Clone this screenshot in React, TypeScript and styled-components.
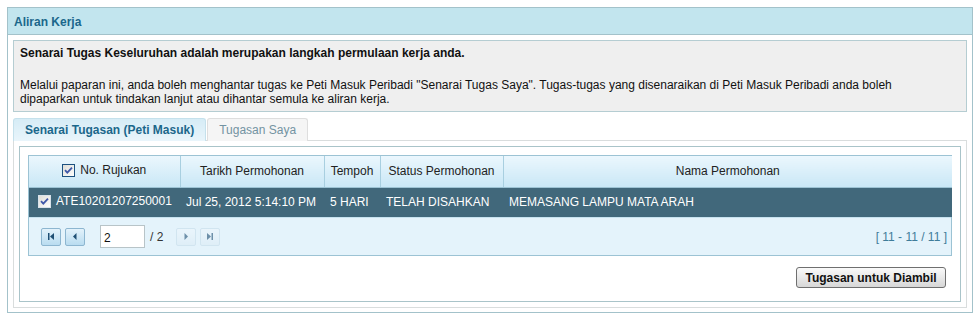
import React from "react";
import styled, { createGlobalStyle } from "styled-components";

const Global = createGlobalStyle`
  html, body { margin: 0; padding: 0; background: #fff; }
  body { padding: 7px 5px 4px 7px; font-family: "Liberation Sans", Arial, sans-serif; font-size: 12px; color: #111; }
  * { box-sizing: border-box; }
`;

const Panel = styled.div`
  width: 966px;
  border: 1px solid #a3c2ca;
  background: #fff;
`;

const PanelHeader = styled.div`
  height: 27px;
  background: #c2e5ee;
  border-bottom: 1px solid #a3c2ca;
  color: #1b678b;
  font-weight: bold;
  display: flex;
  align-items: center;
  padding: 1px 0 0 6px;
`;

const PanelBody = styled.div`
  padding: 5px 5px 4px 5px;
  display: flex;
  flex-direction: column;
`;

const Info = styled.div`
  background: #efefef;
  border: 1px solid #b5cdd2;
  padding: 5px 6px 5px 6px;
  line-height: 14px;
`;

const InfoTitle = styled.p`
  margin: 0 0 18px 0;
  font-weight: bold;
`;

const InfoText = styled.p`
  margin: 0;
  max-width: 900px;
`;

const Tabs = styled.div`
  display: flex;
  margin-top: 6px;
  height: 22px;
`;

const Tab = styled.div<{ $active?: boolean }>`
  height: 23px;
  display: flex;
  align-items: center;
  padding: 0 11px;
  margin-right: 1px;
  border: 1px solid ${(p) => (p.$active ? "#c5e1ec" : "#dedede")};
  border-bottom: none;
  border-radius: 3px 3px 0 0;
  background: ${(p) =>
    p.$active ? "linear-gradient(#d6ecf6, #e9f5fb)" : "#f5f5f5"};
  color: ${(p) => (p.$active ? "#1b678b" : "#7393a2")};
  font-weight: ${(p) => (p.$active ? "bold" : "normal")};
  position: relative;
  z-index: 1;
`;

const TabPanel = styled.div`
  border: 1px solid #d9dddd;
  padding: 5px;
`;

const Inner = styled.div`
  border: 1px solid #a9c4c9;
  padding: 8px 8px 13px 8px;
  display: flex;
  flex-direction: column;
`;

const GridWrap = styled.div`
  border: 1px solid #9cc3d4;
`;

const Table = styled.table`
  width: 100%;
  border-collapse: collapse;
  table-layout: fixed;
`;

const Th = styled.th`
  height: 31px;
  font-weight: normal;
  color: #222;
  text-align: center;
  background: linear-gradient(#ebf7fd, #c9e7f6);
  border-right: 1px solid #a8cfe0;
  border-bottom: 1px solid #9cc3d4;
  padding: 0;
  &:last-child { border-right: none; }
`;

const ThInner = styled.span`
  display: inline-flex;
  align-items: center;
  gap: 5px;
`;

const Td = styled.td`
  height: 30px;
  background: #41687b;
  color: #fff;
  padding: 0 6px;
  white-space: nowrap;
`;

const TdInner = styled.span`
  display: inline-flex;
  align-items: center;
  gap: 5px;
  margin-left: 3px;
`;

const Pager = styled.div`
  height: 38px;
  background: #e4f3fb;
  border-top: 1px solid #c6e2ef;
  display: flex;
  align-items: center;
  padding: 0 4px 0 12px;
`;

const PageBtn = styled.button<{ $disabled?: boolean }>`
  width: 20px;
  height: 18px;
  margin-right: 4px;
  padding: 0;
  border: 1px solid ${(p) => (p.$disabled ? "#c5dcea" : "#8db6d0")};
  border-radius: 2px;
  background: ${(p) =>
    p.$disabled ? "linear-gradient(#eef7fc, #dcecf6)" : "linear-gradient(#e3f2fb, #b9dcf0)"};
  display: flex;
  align-items: center;
  justify-content: center;
  opacity: ${(p) => (p.$disabled ? 0.6 : 1)};
`;

const PageInput = styled.input`
  width: 45px;
  height: 23px;
  margin-left: 11px;
  border: 1px solid #b8c4c8;
  font-family: "Liberation Sans", Arial, sans-serif;
  font-size: 12px;
  padding: 3px 3px 0 3px;
  color: #111;
`;

const PageTotal = styled.span`
  margin: 0 13px 0 5px;
  color: #333;
`;

const PageInfo = styled.span`
  margin-left: auto;
  color: #3f7c9a;
  font-size: 12px;
`;

const Actions = styled.div`
  display: flex;
  justify-content: flex-end;
  margin-top: 11px;
  padding-right: 6px;
`;

const ActionButton = styled.button`
  width: 150px;
  height: 21px;
  border: 1px solid #6f6f6f;
  border-radius: 3px;
  background: linear-gradient(#fafafa, #d7d7d7);
  font-family: "Liberation Sans", Arial, sans-serif;
  font-size: 12px;
  font-weight: bold;
  color: #111;
  padding: 0;
`;

const Check = ({ light }: { light?: boolean }) => (
  <svg width="13" height="13" viewBox="0 0 13 13">
    <defs>
      <linearGradient id={light ? "cbl" : "cbd"} x1="0" y1="0" x2="1" y2="1">
        <stop offset="0" stopColor="#dcdcd6" />
        <stop offset="1" stopColor="#ffffff" />
      </linearGradient>
    </defs>
    <rect x="0.5" y="0.5" width="12" height="12" fill={`url(#${light ? "cbl" : "cbd"})`} stroke={light ? "#d8e2ea" : "#1c5180"} />
    <path d="M3 6.2 L5.3 8.6 L10 3.6" fill="none" stroke="#3f58a8" strokeWidth="1.8" />
  </svg>
);

const Icon = ({ kind }: { kind: "first" | "prev" | "next" | "last" }) => {
  const c = "#1f4f74";
  return (
    <svg width="10" height="9" viewBox="0 0 10 9">
      {kind === "first" && (
        <>
          <rect x="2" y="1" width="1.5" height="7" fill={c} />
          <path d="M8 1 L4 4.5 L8 8 Z" fill={c} />
        </>
      )}
      {kind === "prev" && <path d="M6.5 1 L3 4.5 L6.5 8 Z" fill={c} />}
      {kind === "next" && <path d="M3.5 1 L7 4.5 L3.5 8 Z" fill={c} />}
      {kind === "last" && (
        <>
          <path d="M2 1 L6 4.5 L2 8 Z" fill={c} />
          <rect x="6.5" y="1" width="1.5" height="7" fill={c} />
        </>
      )}
    </svg>
  );
};

const columns = [
  { w: 151, label: "No. Rujukan", check: true },
  { w: 144, label: "Tarikh Permohonan" },
  { w: 56, label: "Tempoh" },
  { w: 123, label: "Status Permohonan" },
  { w: 449, label: "Nama Permohonan" },
];

export default function App() {
  return (
    <>
      <Global />
      <Panel>
        <PanelHeader>Aliran Kerja</PanelHeader>
        <PanelBody>
          <Info>
            <InfoTitle>Senarai Tugas Keseluruhan adalah merupakan langkah permulaan kerja anda.</InfoTitle>
            <InfoText>
              Melalui paparan ini, anda boleh menghantar tugas ke Peti Masuk Peribadi "Senarai Tugas Saya". Tugas-tugas yang disenaraikan di Peti Masuk Peribadi anda boleh dipaparkan untuk tindakan lanjut atau dihantar semula ke aliran kerja.
            </InfoText>
          </Info>
          <Tabs>
            <Tab $active>Senarai Tugasan (Peti Masuk)</Tab>
            <Tab>Tugasan Saya</Tab>
          </Tabs>
          <TabPanel>
            <Inner>
              <GridWrap>
                <Table>
                  <colgroup>
                    {columns.map((c) => (
                      <col key={c.label} style={{ width: c.w }} />
                    ))}
                  </colgroup>
                  <thead>
                    <tr>
                      {columns.map((c) => (
                        <Th key={c.label}>
                          <ThInner>
                            {c.check && <Check />}
                            {c.label}
                          </ThInner>
                        </Th>
                      ))}
                    </tr>
                  </thead>
                  <tbody>
                    <tr>
                      <Td>
                        <TdInner>
                          <Check light />
                          ATE10201207250001
                        </TdInner>
                      </Td>
                      <Td>Jul 25, 2012 5:14:10 PM</Td>
                      <Td>5 HARI</Td>
                      <Td>TELAH DISAHKAN</Td>
                      <Td>MEMASANG LAMPU MATA ARAH</Td>
                    </tr>
                  </tbody>
                </Table>
                <Pager>
                  <PageBtn><Icon kind="first" /></PageBtn>
                  <PageBtn><Icon kind="prev" /></PageBtn>
                  <PageInput defaultValue="2" />
                  <PageTotal>/ 2</PageTotal>
                  <PageBtn $disabled><Icon kind="next" /></PageBtn>
                  <PageBtn $disabled><Icon kind="last" /></PageBtn>
                  <PageInfo>[ 11 - 11 / 11 ]</PageInfo>
                </Pager>
              </GridWrap>
              <Actions>
                <ActionButton>Tugasan untuk Diambil</ActionButton>
              </Actions>
            </Inner>
          </TabPanel>
        </PanelBody>
      </Panel>
    </>
  );
}
